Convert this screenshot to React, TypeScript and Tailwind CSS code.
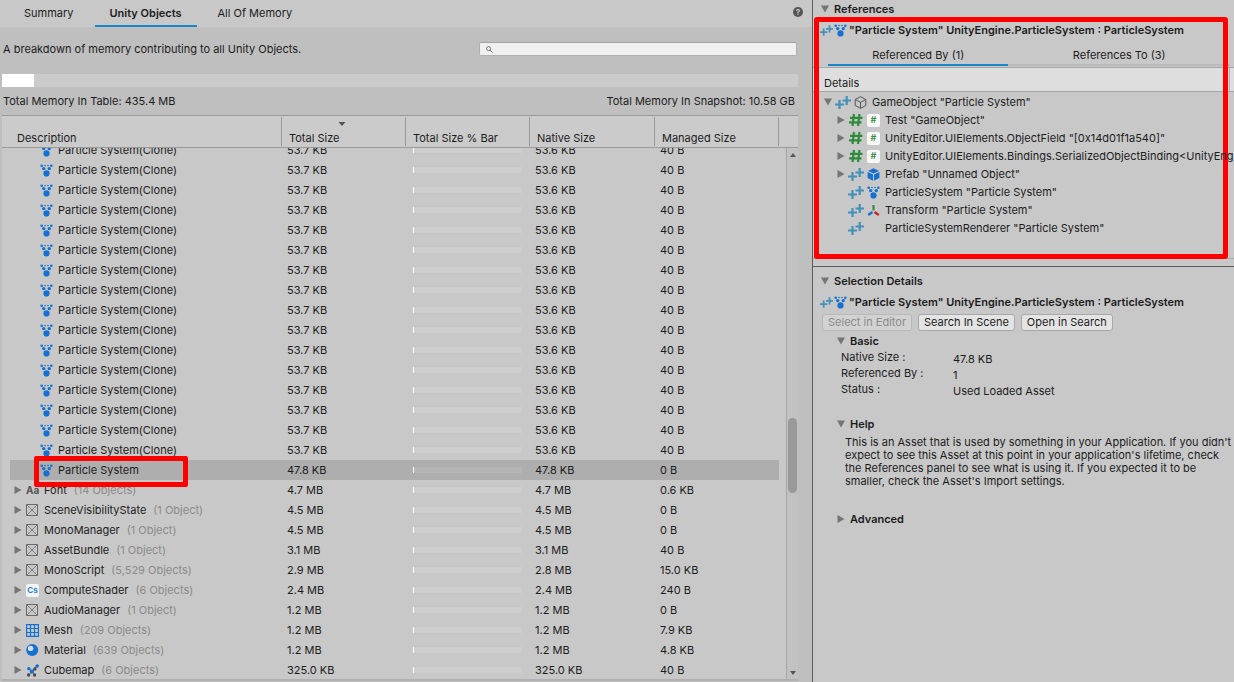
import { useLayoutEffect, useRef, type ReactNode } from "react";

type IconName =
  | "particle" | "font" | "object" | "compute" | "mesh" | "material"
  | "cubemap" | "gameobject" | "script" | "prefab" | "transform" | "none";

function Icon({ name }: { name: IconName }) {
  const base = "size-[13px] shrink-0";
  switch (name) {
    case "particle":
      return (
        <svg viewBox="0 0 13 13" className={base} fill="#1371d3" aria-hidden="true">
          <circle cx="6.5" cy="9.4" r="3.1" />
          <circle cx="3.7" cy="4.6" r="1.7" />
          <circle cx="9.3" cy="4.6" r="1.7" />
          <circle cx="1.7" cy="1.8" r="1.3" />
          <circle cx="11.3" cy="1.8" r="1.3" />
          <circle cx="5" cy="1.6" r="0.8" />
          <circle cx="8" cy="1.6" r="0.8" />
        </svg>
      );
    case "font":
      return <span aria-hidden="true" className="w-[13px] shrink-0 text-[10px] font-bold text-[#555555]">Aa</span>;
    case "object":
      return (
        <svg viewBox="0 0 13 13" className={base} fill="none" stroke="#6b6b6b" aria-hidden="true">
          <path d="M.5 .5h11v11H.5z" strokeWidth="1" />
          <path d="M.5 .5l11 11M11.5 .5l-11 11" strokeWidth="0.8" />
        </svg>
      );
    case "compute":
      return (
        <span aria-hidden="true" className="flex size-[13px] shrink-0 items-center justify-center rounded-[2px] bg-[#f4f4f4] text-[8px] font-bold text-[#2f86d6]">
          Cs
        </span>
      );
    case "mesh":
      return (
        <svg viewBox="0 0 13 13" className={base} fill="none" stroke="#1371d3" strokeWidth="1.2" aria-hidden="true">
          <path d="M.6 .6h11.8v11.8H.6zM4.5 .6v11.8M8.5 .6v11.8M.6 4.5h11.8M.6 8.5h11.8" />
        </svg>
      );
    case "material":
      return (
        <svg viewBox="0 0 13 13" className={base} aria-hidden="true">
          <circle cx="6.2" cy="6" r="6" fill="#1371d3" />
          <circle cx="4.6" cy="4.4" r="2.7" fill="#d5dee8" />
        </svg>
      );
    case "cubemap":
      return (
        <svg viewBox="0 0 13 13" className={base} aria-hidden="true">
          <path d="M2.5 4.5L6 7.5L11 2.2" stroke="#1371d3" strokeWidth="1.2" fill="none" />
          <path d="M6 7.5L2.5 11M6 7.5L9 11" stroke="#555555" strokeWidth="1" fill="none" />
          <g fill="#1371d3">
            <circle cx="11.2" cy="2" r="1.8" />
            <circle cx="2.8" cy="4.6" r="1.7" />
            <circle cx="5.9" cy="7.6" r="2.1" />
          </g>
          <g fill="#4c4c4c">
            <circle cx="8.9" cy="5" r="1.7" />
            <circle cx="2.6" cy="11" r="1.7" />
            <circle cx="8.6" cy="11" r="1.7" />
          </g>
        </svg>
      );
    case "gameobject":
      return (
        <svg viewBox="0 0 13 13" className={base} fill="none" stroke="#555555" strokeWidth="1" strokeLinejoin="round" aria-hidden="true">
          <path d="M6.5 .7l5.3 2.8v6l-5.3 2.8l-5.3-2.8v-6zM1.2 3.500l5.3 2.8l5.3-2.8M6.5 6.300v6" />
        </svg>
      );
    case "script":
      return (
        <span aria-hidden="true" className="flex size-[13px] shrink-0 items-center justify-center rounded-[2px] bg-[#f8f8f8] text-[9px] font-semibold text-[#3b8a44]">
          #
        </span>
      );
    case "prefab":
      return (
        <svg viewBox="0 0 13 13" className={base} aria-hidden="true">
          <path d="M6.5 .3L12 3L6.5 5.6L1 3zM.6 3.900L6 6.500v6.300L.6 10zM12.4 3.900L7 6.500v6.300l5.4-2.8z" fill="#1371d3" />
        </svg>
      );
    case "transform":
      return (
        <svg viewBox="0 0 13 13" className={base} aria-hidden="true">
          <path d="M6.500 6.500V1" stroke="#3b8a44" strokeWidth="2.2" />
          <path d="M5.500 8L1.200 11" stroke="#1371d3" strokeWidth="2.4" />
          <path d="M7.500 8L11.800 11" stroke="#c4261d" strokeWidth="2.4" />
        </svg>
      );
    default:
      return <span className={base} />;
  }
}

function PlusPlus({ small = false }: { small?: boolean }) {
  return (
    <svg viewBox="0 0 16 13" className={small ? "h-[11px] w-[13px] shrink-0" : "h-[13px] w-4 shrink-0"} stroke="#4390b8" strokeWidth="2.2" fill="none" aria-hidden="true">
      <path d="M0 8.500h9M4.500 4v9M7.500 4.500h8.500M11.700 0v9" />
    </svg>
  );
}

function Hash() {
  return (
    <svg viewBox="0 0 16 14" className="h-[14px] w-4 shrink-0" stroke="#2f8a3c" strokeWidth="2.2" fill="none" aria-hidden="true">
      <path d="M2 4.800h12.500M1 9.300h12.500M6 1L4.500 13M11.500 1L10 13" />
    </svg>
  );
}

function Arrow({ open = false }: { open?: boolean }) {
  return (
    <svg viewBox="0 0 8 8" className="size-2 shrink-0" fill="#757575" aria-hidden="true">
      {open ? <path d="M0 .5h8L4 7.500z" /> : <path d="M.5 0v8L7.500 4z" />}
    </svg>
  );
}

type Row = { name: string; count?: string; icon: IconName; total: string; native: string; managed: string; selected?: boolean };

const rows: Row[] = [
  ...Array.from({ length: 16 }, (): Row => ({
    name: "Particle System(Clone)", icon: "particle", total: "53.7 KB", native: "53.6 KB", managed: "40 B",
  })),
  { name: "Particle System", icon: "particle", total: "47.8 KB", native: "47.8 KB", managed: "0 B", selected: true },
  { name: "Font", count: "(14 Objects)", icon: "font", total: "4.7 MB", native: "4.7 MB", managed: "0.6 KB" },
  { name: "SceneVisibilityState", count: "(1 Object)", icon: "object", total: "4.5 MB", native: "4.5 MB", managed: "0 B" },
  { name: "MonoManager", count: "(1 Object)", icon: "object", total: "4.5 MB", native: "4.5 MB", managed: "0 B" },
  { name: "AssetBundle", count: "(1 Object)", icon: "object", total: "3.1 MB", native: "3.1 MB", managed: "40 B" },
  { name: "MonoScript", count: "(5,529 Objects)", icon: "object", total: "2.9 MB", native: "2.8 MB", managed: "15.0 KB" },
  { name: "ComputeShader", count: "(6 Objects)", icon: "compute", total: "2.4 MB", native: "2.4 MB", managed: "240 B" },
  { name: "AudioManager", count: "(1 Object)", icon: "object", total: "1.2 MB", native: "1.2 MB", managed: "0 B" },
  { name: "Mesh", count: "(209 Objects)", icon: "mesh", total: "1.2 MB", native: "1.2 MB", managed: "7.9 KB" },
  { name: "Material", count: "(639 Objects)", icon: "material", total: "1.2 MB", native: "1.2 MB", managed: "4.8 KB" },
  { name: "Cubemap", count: "(6 Objects)", icon: "cubemap", total: "325.0 KB", native: "325.0 KB", managed: "40 B" },
];

function Tab({ children, active = false }: { children: ReactNode; active?: boolean }) {
  return (
    <button
      type="button"
      role="tab"
      aria-selected={active}
      className={`border-b-2 px-[15px] ${active ? "border-[#1886c9] font-semibold" : "border-transparent"}`}
    >
      {children}
    </button>
  );
}

function HeaderCell({ children, sorted = false }: { children?: ReactNode; sorted?: boolean }) {
  return (
    <th scope="col" className="border-y border-[#999999] bg-[#cbcbcb] p-0 font-normal">
      <div className="relative flex h-[31px] items-end py-px">
        <div className="flex h-full flex-1 items-end border-r border-[#999999] pl-[7px] text-left">{children}</div>
        {sorted && (
          <svg viewBox="0 0 7 4" className="absolute top-1.5 left-[48%] h-1 w-[7px] -translate-x-1/2" fill="#555555" aria-hidden="true">
            <path d="M0 0h7L3.500 4z" />
          </svg>
        )}
      </div>
    </th>
  );
}

function ObjectRow({ row }: { row: Row }) {
  const bg = row.selected ? "bg-[#aeaeae]" : "";
  return (
    <tr className="h-5" aria-selected={row.selected}>
      <td className="p-0">
        <div className={`relative ml-2 flex h-5 items-center ${bg} ${row.count ? "pl-1" : "pl-[30px]"}`}>
          {row.count && (
            <button type="button" aria-label={`Expand ${row.name}`} className="mr-1">
              <Arrow />
            </button>
          )}
          <Icon name={row.icon} />
          <span className="ml-[5px]">{row.name}</span>
          {row.count && <span className="ml-[7px] text-[#8b8b8b]">{row.count}</span>}
          {row.selected && (
            <span className="absolute -top-1 left-6 z-10 h-[31px] w-[154px] rounded-[2px] border-[5px] border-[#ff0000]" />
          )}
        </div>
      </td>
      <td className={`p-0 pl-[5px] ${bg}`}>{row.total}</td>
      <td className={`p-0 pr-2 pl-[7px] ${bg}`}>
        <div className={`h-1.5 border-l border-white ${row.selected ? "bg-[#b5b5b5]" : "bg-[#cecece]"}`} />
      </td>
      <td className={`p-0 pl-[5px] ${bg}`}>{row.native}</td>
      <td className={`p-0 pl-[5px] ${bg}`}>{row.managed}</td>
      <td className="p-0" />
    </tr>
  );
}

function ObjectsTable() {
  const scroller = useRef<HTMLDivElement>(null);
  useLayoutEffect(() => {
    if (scroller.current) scroller.current.scrollTop = 8;
  }, []);
  return (
    <div className="relative mr-[14px] ml-0.5 min-h-0 flex-1 border-b-2 border-[#b0b0b0] bg-[#c8c8c8]">
      <div ref={scroller} className="h-full overflow-hidden">
        <table className="w-full table-fixed border-separate border-spacing-0">
          <colgroup>
            <col />
            <col className="w-[124px]" />
            <col className="w-[124px]" />
            <col className="w-[125px]" />
            <col className="w-[124px]" />
            <col className="w-[19px]" />
          </colgroup>
          <thead className="sticky top-0 z-20">
            <tr>
              <HeaderCell><span className="pl-2">Description</span></HeaderCell>
              <HeaderCell sorted>Total Size</HeaderCell>
              <HeaderCell>Total Size % Bar</HeaderCell>
              <HeaderCell>Native Size</HeaderCell>
              <HeaderCell>Managed Size</HeaderCell>
              <td className="border-y border-[#999999] bg-[#cbcbcb]" />
            </tr>
          </thead>
          <tbody>
            {rows.map((row, i) => (
              <ObjectRow key={i} row={row} />
            ))}
          </tbody>
        </table>
      </div>
      <div className="absolute top-[33px] right-0 bottom-0 flex w-3 flex-col items-center border-l border-[#a6a6a6] bg-[#c2c2c2]">
        <svg viewBox="0 0 6 4" className="mt-[5px] h-1 w-1.5" fill="#555555" aria-hidden="true"><path d="M0 4h6L3 0z" /></svg>
        <div className="flex w-full flex-1 flex-col items-center">
          <div className="grow-[261]" />
          <div className="w-[9px] grow-[75] rounded-full bg-[#999999]" />
          <div className="grow-[178]" />
        </div>
        <svg viewBox="0 0 6 4" className="mb-1 h-1 w-1.5" fill="#555555" aria-hidden="true"><path d="M0 0h6L3 4z" /></svg>
      </div>
    </div>
  );
}

function Foldout({ title, open = true }: { title: string; open?: boolean }) {
  return (
    <h2 className="font-semibold">
      <button type="button" aria-expanded={open} className="flex h-4 items-center gap-[5px]">
        <Arrow open={open} />
        {title}
      </button>
    </h2>
  );
}

function SelectionTitle() {
  return (
    <div className="flex h-4 items-center pl-[7px] font-semibold whitespace-nowrap">
      <PlusPlus small />
      <span className="ml-px flex"><Icon name="particle" /></span>
      <span className="ml-0.5">"Particle System" UnityEngine.ParticleSystem : ParticleSystem</span>
    </div>
  );
}

type Ref = { label: string; icon: IconName; marker: "plus" | "hash"; arrow?: "open" | "closed"; root?: boolean };

const refs: Ref[] = [
  { label: 'GameObject "Particle System"', icon: "gameobject", marker: "plus", arrow: "open", root: true },
  { label: 'Test "GameObject"', icon: "script", marker: "hash", arrow: "closed" },
  { label: 'UnityEditor.UIElements.ObjectField "[0x14d01f1a540]"', icon: "script", marker: "hash", arrow: "closed" },
  { label: "UnityEditor.UIElements.Bindings.SerializedObjectBinding<UnityEng", icon: "script", marker: "hash", arrow: "closed" },
  { label: 'Prefab "Unnamed Object"', icon: "prefab", marker: "plus", arrow: "closed" },
  { label: 'ParticleSystem "Particle System"', icon: "particle", marker: "plus" },
  { label: 'Transform "Particle System"', icon: "transform", marker: "plus" },
  { label: 'ParticleSystemRenderer "Particle System"', icon: "none", marker: "plus" },
];

function ReferenceRow({ item }: { item: Ref }) {
  return (
    <li className={`flex h-[18px] items-center whitespace-nowrap ${item.root ? "pl-[11px]" : "pl-6"}`}>
      {item.arrow ? (
        <button type="button" aria-label={`Toggle ${item.label}`}><Arrow open={item.arrow === "open"} /></button>
      ) : (
        <span className="w-2 shrink-0" />
      )}
      <span className="mr-[3px] ml-[3px] flex">{item.marker === "plus" ? <PlusPlus /> : <Hash />}</span>
      <Icon name={item.icon} />
      <span className="ml-[5px]">{item.label}</span>
    </li>
  );
}

function References() {
  return (
    <section className="relative h-[266px] pt-px">
      <div className="pl-2"><Foldout title="References" /></div>
      <div className="pt-[5px]"><SelectionTitle /></div>
      <div role="tablist" className="mt-[7px] mr-1 ml-[15px] grid h-[21px] grid-cols-[180fr_221fr]">
        <button type="button" role="tab" aria-selected="true" className="border-b-2 border-[#1886c9]">Referenced By (1)</button>
        <button type="button" role="tab" aria-selected="false" className="border-b-2 border-[#bababa]">References To (3)</button>
      </div>
      <div className="mt-px flex h-[25px] items-end border-y border-[#a6a6a6] bg-[#dedede] pr-1">
        <span className="flex-1 self-stretch border-r border-[#b4b4b4] pt-[7px] pl-[11px]">Details</span>
      </div>
      <ul className="relative z-10 pt-px">
        {refs.map((r) => (
          <ReferenceRow key={r.label} item={r} />
        ))}
      </ul>
      <div className="absolute top-[258px] right-0 left-0 border-t border-[#a6a6a6]" />
      <div className="absolute top-[17px] right-1.5 left-px h-[242px] rounded-[3px] border-[5px] border-[#ff0000]" />
    </section>
  );
}

function ActionButton({ children, disabled = false }: { children: ReactNode; disabled?: boolean }) {
  return (
    <button
      type="button"
      disabled={disabled}
      className={`h-[17px] rounded-[3px] border px-[5px] leading-[15px] ${
        disabled ? "border-[#b8b8b8] bg-[#d2d2d2] text-[#8b8b8b]" : "border-[#a8a8a8] bg-[#e4e4e4]"
      }`}
    >
      {children}
    </button>
  );
}

const basics = [
  ["Native Size :", "47.8 KB"],
  ["Referenced By :", "1"],
  ["Status :", "Used Loaded Asset"],
];

function SelectionDetails() {
  return (
    <section className="border-t border-[#5c5c5c] pt-1.5">
      <div className="pl-2"><Foldout title="Selection Details" /></div>
      <div className="pt-[5px]"><SelectionTitle /></div>
      <div className="mt-1 flex gap-1.5 pl-[9px]">
        <ActionButton disabled>Select in Editor</ActionButton>
        <ActionButton>Search In Scene</ActionButton>
        <ActionButton>Open in Search</ActionButton>
      </div>
      <div className="mt-0.5 pl-6">
        <Foldout title="Basic" />
        <dl className="grid grid-cols-[112px_1fr] pl-1">
          {basics.map(([k, v]) => (
            <div key={k} className="contents">
              <dt className="h-4">{k}</dt>
              <dd className="h-4 pt-0.5">{v}</dd>
            </div>
          ))}
        </dl>
        <div className="mt-[19px]"><Foldout title="Help" /></div>
        <p className="mt-1 pl-2 leading-[13px]">
          This is an Asset that is used by something in your Application. If you didn't expect to see this Asset at this
          point in your application's lifetime, check the References panel to see what is using it. If you expected it
          to be smaller, check the Asset's Import settings.
        </p>
        <div className="mt-[23px]"><Foldout title="Advanced" open={false} /></div>
      </div>
    </section>
  );
}

export default function App() {
  return (
    <div className="grid h-screen grid-cols-[minmax(0,812fr)_minmax(0,422fr)] overflow-hidden bg-[#c8c8c8] font-[Inter,'Liberation_Sans',sans-serif] text-[11px] leading-4 text-[#1c1c1c]">
      <main className="flex h-screen min-w-0 flex-col bg-[#bfbfbf] pb-px">
        <header className="flex h-[27px] shrink-0 items-stretch justify-between bg-[#c8c8c8] pr-[9px] pl-[9px]">
          <div role="tablist" className="flex gap-[6px]">
            <Tab>Summary</Tab>
            <Tab active>Unity Objects</Tab>
            <Tab>All Of Memory</Tab>
          </div>
          <button type="button" aria-label="Help" className="my-auto flex size-[10px] -translate-y-0.5 items-center justify-center rounded-full bg-[#555555] text-[8px] leading-none font-bold text-[#c8c8c8]">
            ?
          </button>
        </header>
        <div className="flex h-11 shrink-0 items-center justify-between pr-[15px] pl-[3px]">
          <p>A breakdown of memory contributing to all Unity Objects.</p>
          <label className="flex h-[14px] w-[318px] items-center rounded-[2px] border border-[#b0b0b0] border-t-[#a0a0a0] bg-[#f0f0f0] pl-1.5">
            <svg viewBox="0 0 7 7" className="size-[7px] shrink-0" fill="none" stroke="#666666" strokeWidth="0.9" aria-hidden="true">
              <circle cx="2.6" cy="2.6" r="2" />
              <path d="M4 4l2.700 2.700" />
            </svg>
            <input type="text" aria-label="Search" className="h-3 min-w-0 flex-1 bg-transparent px-1 outline-none" />
          </label>
        </div>
        <div className="mt-[3px] mr-[14px] ml-0.5 h-[13px] shrink-0 bg-[#cbcbcb]">
          <div className="h-full w-[4%] bg-white" />
        </div>
        <div className="flex h-7 shrink-0 items-center justify-between pr-[17px] pl-[3px]">
          <span>Total Memory In Table: 435.4 MB</span>
          <span>Total Memory In Snapshot: 10.58 GB</span>
        </div>
        <ObjectsTable />
      </main>
      <aside className="min-w-0 border-l border-[#5c5c5c]">
        <References />
        <SelectionDetails />
      </aside>
    </div>
  );
}
